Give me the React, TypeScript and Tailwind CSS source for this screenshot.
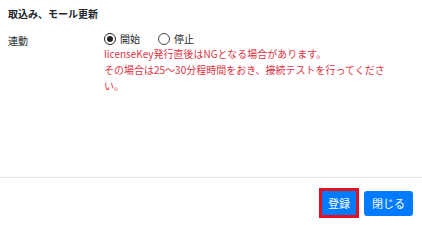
import React from "react";

function Radio({ checked, label }: { checked: boolean; label: string }) {
  return (
    <label className="flex items-center">
      <span
        className={
          checked
            ? "w-[12px] h-[12px] rounded-full border border-[#222] flex items-center justify-center"
            : "w-[12px] h-[12px] rounded-full border border-[#444] flex items-center justify-center"
        }
      >
        {checked && <span className="w-[6px] h-[6px] rounded-full bg-[#222]" />}
      </span>
      <span className="ml-[4px]">{label}</span>
    </label>
  );
}

export default function App() {
  return (
    <div className="w-[422px] h-[225px] bg-white flex flex-col text-[#212529] font-['Noto_Sans_CJK_JP',sans-serif]">
      <div className="h-[177px] px-[8px] pt-[6px]">
        <div className="text-[10px] font-bold leading-[15px]">取込み、モール更新</div>
        <div className="flex mt-[10px]">
          <div className="w-[96px] text-[10px] leading-[15px] pt-[2px]">連動</div>
          <div className="w-[290px]">
            <div className="flex items-center h-[15px] gap-[18px] text-[10px]">
              <Radio checked label="開始" />
              <Radio checked={false} label="停止" />
            </div>
            <div className="text-[10px] leading-[16px] text-[#dc3545]">
              licenseKey発行直後はNGとなる場合があります。
              <br />
              その場合は25～30分程時間をおき、接続テストを行ってください。
            </div>
          </div>
        </div>
      </div>
      <div className="border-t border-[#e5e5e5] flex-1 flex items-center justify-end gap-[5px] pr-[9px] pt-[3px]">
        <button className="w-[40px] h-[30px] border-[3px] border-[#e3101f] bg-[#007bff] text-white text-[11px] flex items-center justify-center">
          登録
        </button>
        <button className="w-[49px] h-[25px] rounded-[3px] bg-[#007bff] text-white text-[11px] flex items-center justify-center">
          閉じる
        </button>
      </div>
    </div>
  );
}
